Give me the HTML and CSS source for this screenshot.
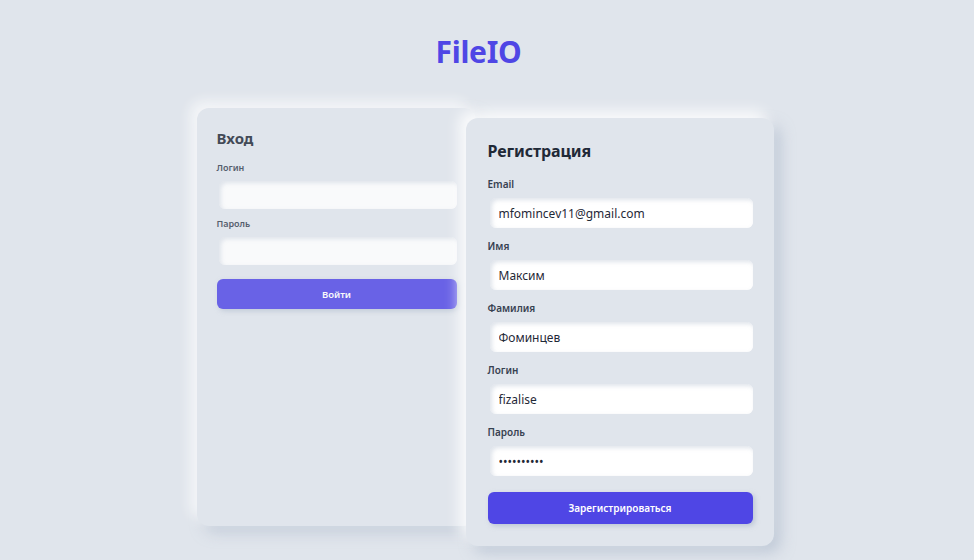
FILE: index.html
```html
<!DOCTYPE html>
<html lang="ru">
<head>
<meta charset="utf-8">
<title>FileIO</title>
<link rel="stylesheet" href="styles.css">
</head>
<body>
<header class="header"><h1 class="logo">FileIO</h1></header>
<main class="cards">
  <section class="card card-login">
    <h2 class="card-title">Вход</h2>
    <div class="field">
      <label class="label">Логин</label>
      <input class="input" type="text" value="">
    </div>
    <div class="field">
      <label class="label">Пароль</label>
      <input class="input" type="password" value="">
    </div>
    <button class="btn">Войти</button>
  </section>
  <section class="card card-register">
    <h2 class="card-title">Регистрация</h2>
    <div class="field">
      <label class="label">Email</label>
      <input class="input" type="text" value="mfomincev11@gmail.com">
    </div>
    <div class="field">
      <label class="label">Имя</label>
      <input class="input" type="text" value="Максим">
    </div>
    <div class="field">
      <label class="label">Фамилия</label>
      <input class="input" type="text" value="Фоминцев">
    </div>
    <div class="field">
      <label class="label">Логин</label>
      <input class="input" type="text" value="fizalise">
    </div>
    <div class="field">
      <label class="label">Пароль</label>
      <input class="input" type="password" value="1234567890">
    </div>
    <button class="btn">Зарегистрироваться</button>
  </section>
</main>
</body>
</html>
```
FILE: styles.css
```css
* { box-sizing: border-box; }
html, body { margin: 0; padding: 0; }
body {
  background: #e0e5ec;
  font-family: "Noto Sans", "Open Sans", sans-serif;
  width: 974px;
  height: 560px;
  overflow: hidden;
}
.header {
  padding-top: 32px;
  padding-right: 17px;
  display: flex;
  justify-content: center;
}
.logo {
  margin: 0;
  font-size: 30px;
  line-height: 40px;
  font-weight: 700;
  color: #4f46e5;
  letter-spacing: -0.3px;
}
.cards {
  margin-top: 36px;
  padding-right: 4px;
  display: flex;
  justify-content: center;
  align-items: flex-start;
}
.card {
  background: #e0e5ec;
  border-radius: 12px;
  display: flex;
  flex-direction: column;
  box-shadow: -7px -7px 14px rgba(255,255,255,0.85), 7px 7px 14px rgba(163,177,198,0.5);
}
.card-login {
  width: 279px;
  height: 418px;
  padding: 20px 19px 20px 20px;
  opacity: 0.82;
}
.card-register {
  position: relative;
  width: 308px;
  margin-top: 10px;
  margin-left: -10px;
  padding: 22px 21px 22px 22px;
}
.card-title {
  margin: 0;
  font-weight: 700;
  color: #1f2937;
}
.card-login .card-title { font-size: 15px; line-height: 20px; margin-bottom: 14px; }
.card-register .card-title { font-size: 16px; line-height: 22px; margin-bottom: 15px; letter-spacing: -0.1px; }
.field { display: flex; flex-direction: column; }
.label {
  font-weight: 600;
  color: #374151;
}
.card-login .label { font-size: 9px; line-height: 12px; margin-bottom: 7px; }
.card-register .label { font-size: 10px; line-height: 14px; margin-bottom: 7px; }
.input {
  border: none;
  outline: none;
  background: #ffffff;
  border-radius: 6px;
  font-family: inherit;
  color: #1f2937;
  box-shadow: inset 2px 2px 4px rgba(163,177,198,0.35), inset -2px -2px 4px rgba(255,255,255,0.9);
}
.card-login .input { height: 28px; margin-bottom: 9px; margin-left: 2px; width: calc(100% - 2px); }
.card-register .input { height: 30px; margin-bottom: 11px; padding-left: 9px; font-size: 12px; margin-left: 2px; width: calc(100% - 2px); }
.card-register .field:last-of-type .input { margin-bottom: 16px; }
.card-login .field:last-of-type .input { margin-bottom: 14px; }
.btn {
  border: none;
  background: #4f46e5;
  color: #ffffff;
  font-family: inherit;
  font-weight: 600;
  border-radius: 6px;
  box-shadow: 2px 2px 5px rgba(163,177,198,0.6);
}
.card-login .btn { height: 30px; font-size: 9.5px; }
.card-register .btn { height: 32px; font-size: 10px; }
```
